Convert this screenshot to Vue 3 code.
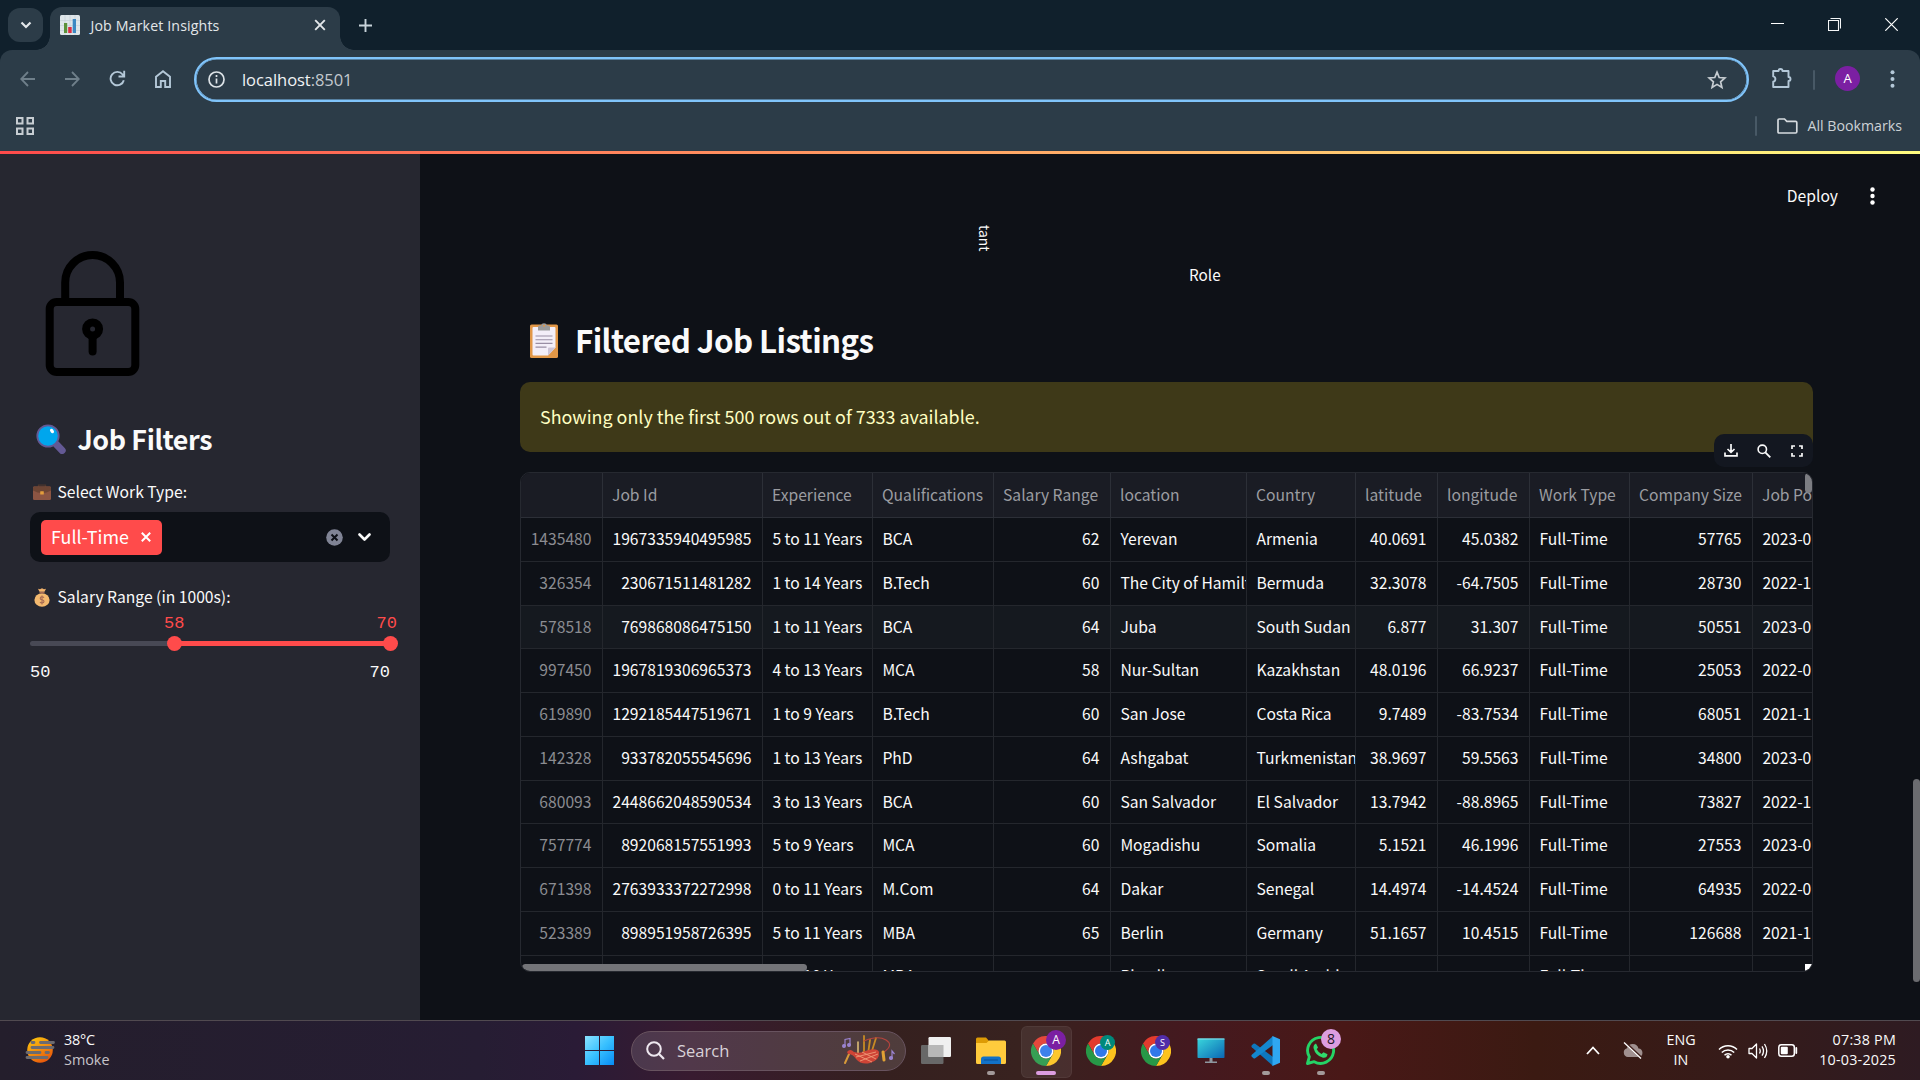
<script setup>
const columns = [
  { label: '', w: 82, right: true },
  { label: 'Job Id', w: 160, right: true },
  { label: 'Experience', w: 110 },
  { label: 'Qualifications', w: 121 },
  { label: 'Salary Range', w: 117, right: true },
  { label: 'location', w: 136 },
  { label: 'Country', w: 109 },
  { label: 'latitude', w: 82, right: true },
  { label: 'longitude', w: 92, right: true },
  { label: 'Work Type', w: 100 },
  { label: 'Company Size', w: 123, right: true },
  { label: 'Job Posting Date', w: 150 }
]
const rows = [
  ['1435480', '1967335940495985', '5 to 11 Years', 'BCA', '62', 'Yerevan', 'Armenia', '40.0691', '45.0382', 'Full-Time', '57765', '2023-0'],
  ['326354', '230671511481282', '1 to 14 Years', 'B.Tech', '60', 'The City of Hamilton', 'Bermuda', '32.3078', '-64.7505', 'Full-Time', '28730', '2022-1'],
  ['578518', '769868086475150', '1 to 11 Years', 'BCA', '64', 'Juba', 'South Sudan', '6.877', '31.307', 'Full-Time', '50551', '2023-0'],
  ['997450', '1967819306965373', '4 to 13 Years', 'MCA', '58', 'Nur-Sultan', 'Kazakhstan', '48.0196', '66.9237', 'Full-Time', '25053', '2022-0'],
  ['619890', '1292185447519671', '1 to 9 Years', 'B.Tech', '60', 'San Jose', 'Costa Rica', '9.7489', '-83.7534', 'Full-Time', '68051', '2021-1'],
  ['142328', '933782055545696', '1 to 13 Years', 'PhD', '64', 'Ashgabat', 'Turkmenistan', '38.9697', '59.5563', 'Full-Time', '34800', '2023-0'],
  ['680093', '2448662048590534', '3 to 13 Years', 'BCA', '60', 'San Salvador', 'El Salvador', '13.7942', '-88.8965', 'Full-Time', '73827', '2022-1'],
  ['757774', '892068157551993', '5 to 9 Years', 'MCA', '60', 'Mogadishu', 'Somalia', '5.1521', '46.1996', 'Full-Time', '27553', '2023-0'],
  ['671398', '2763933372272998', '0 to 11 Years', 'M.Com', '64', 'Dakar', 'Senegal', '14.4974', '-14.4524', 'Full-Time', '64935', '2022-0'],
  ['523389', '898951958726395', '5 to 11 Years', 'MBA', '65', 'Berlin', 'Germany', '51.1657', '10.4515', 'Full-Time', '126688', '2021-1'],
  ['', '', '3 to 10 Years', 'MBA', '', 'Riyadh', 'Saudi Arabia', '', '', 'Full-Time', '', '']
]
const chromes = [
  { letter: 'A', color: '#7b1fa2', active: true },
  { letter: 'A', color: '#00897b' },
  { letter: 'S', color: '#512da8' }
]
</script>

<template>
  <div class="screen">
    <header class="tabstrip">
      <div class="tab-search">
        <svg width="12" height="8" viewBox="0 0 12 8"><path d="M1.5 1.5 6 6l4.500-4.500" fill="none" stroke="#e3e7ea" stroke-width="2.200" /></svg>
      </div>
      <div class="tab">
        <svg class="favicon" width="20" height="20" viewBox="0 0 20 20">
          <rect width="20" height="20" rx="1.500" fill="#dfe6ea" />
          <path d="M0 5.500h20M0 10.500h20M0 15.500h20M5 0v20M10 0v20M15 0v20" stroke="#c3ced6" stroke-width=".6" />
          <path d="M4 8h3.200v10H4z" fill="#5c913b" /><path d="M8.200 12h3.500v6H8.200z" fill="#dd2e44" /><path d="M12.700 4h3.300v14h-3.300z" fill="#3b88c3" />
        </svg>
        <span class="tab-title">Job Market Insights</span>
        <svg width="12" height="12" viewBox="0 0 12 12"><path d="M1.200 1.200l9.600 9.600M10.800 1.200L1.200 10.800" stroke="#e3e7ea" stroke-width="1.900" /></svg>
      </div>
      <svg class="plus" width="13" height="13" viewBox="0 0 13 13"><path d="M6.500 0v13M0 6.500h13" stroke="#c8d3da" stroke-width="1.900" /></svg>
      <div class="win-buttons">
        <svg width="13" height="13" viewBox="0 0 13 13"><path d="M0 5.500h13" stroke="#fff" /></svg>
        <svg width="13" height="13" viewBox="0 0 13 13"><path d="M.5 2.500h10v10h-10zM2.500.5h9a1 1 0 0 1 1 1v9" fill="none" stroke="#f4f6f7" stroke-width="1.100" /></svg>
        <svg width="13" height="13" viewBox="0 0 13 13"><path d="M.3.3l12.400 12.400M12.700.3L.3 12.700" stroke="#fff" stroke-width="1.200" /></svg>
      </div>
    </header>

    <div class="chrome-bars">
      <div class="nav">
        <svg class="i-back" width="16" height="16" viewBox="0 0 16 16"><path d="M15 8H1.500M8 1 1.200 8 8 15" fill="none" stroke="#6f7f8a" stroke-width="1.800" /></svg>
        <svg class="i-fwd" width="16" height="16" viewBox="0 0 16 16"><path d="M1 8h13.500M8 1l6.800 7L8 15" fill="none" stroke="#6f7f8a" stroke-width="1.800" /></svg>
        <svg class="i-reload" width="17" height="17" viewBox="0 0 17 17"><path d="M14.800 10.200A6.700 6.700 0 1 1 13.600 4.500L15 6.200M15.200.8v5.700H9.500" fill="none" stroke="#b4c8d8" stroke-width="1.900" /></svg>
        <svg class="i-home" width="16" height="18" viewBox="0 0 16 18"><path d="M1 6.800 8 1.300l7 5.500V17h-4.800v-6H5.800v6H1z" fill="none" stroke="#b4c8d8" stroke-width="1.900" /></svg>
        <div class="omnibox">
          <svg width="17" height="17" viewBox="0 0 17 17"><circle cx="8.500" cy="8.500" r="7.500" fill="none" stroke="#dde3e7" stroke-width="1.700" /><path d="M8.500 7.500v5M8.500 4v1.900" stroke="#dde3e7" stroke-width="1.700" /></svg>
          <span class="url">localhost<i>:8501</i></span>
          <svg class="star" width="20" height="20" viewBox="0 0 20 20"><path d="M10 2.200l2.200 5.300 5.700.5-4.300 3.800 1.300 5.600-4.900-3-4.900 3 1.300-5.600L2.100 8l5.700-.5z" fill="none" stroke="#c7cdd2" stroke-width="1.700" /></svg>
        </div>
        <svg class="i-ext" width="22" height="22" viewBox="0 0 22 22"><path d="M2.200 4h5.300a2 2 0 0 1 4 0h6v6a2 2 0 0 1 0 4v6H2.200v-5.300a2.700 2.700 0 0 0 0-5.300z" fill="none" stroke="#b4c8d8" stroke-width="1.900" stroke-linejoin="round" /></svg>
        <span class="vbar nav-bar"></span>
        <span class="avatar">A</span>
        <svg class="i-more" width="5" height="18" viewBox="0 0 5 18"><g fill="#b4c8d8"><circle cx="2.500" cy="2.300" r="2" /><circle cx="2.500" cy="9" r="2" /><circle cx="2.500" cy="15.700" r="2" /></g></svg>
      </div>
      <div class="bookmarks">
        <svg width="18" height="18" viewBox="0 0 18 18"><path d="M1 1h5.500v5.500H1zM11.500 1H17v5.500h-5.500zM1 11.500h5.500V17H1zM11.500 11.500H17V17h-5.500z" fill="none" stroke="#c7cdd2" stroke-width="2" /></svg>
        <span class="vbar"></span>
        <svg class="folder" width="21" height="16" viewBox="0 0 21 16"><path d="M1 14V2.200Q1 1 2.200 1h5.300l2.300 2.300h8.800q1.200 0 1.200 1.200v9.300q0 1.200-1.200 1.200H2.200Q1 15 1 14z" fill="none" stroke="#d5dade" stroke-width="1.700" /></svg>
        <span>All Bookmarks</span>
      </div>
    </div>
    <div class="decoration"></div>

    <div class="app">
      <aside>
        <svg class="lock" width="96" height="127" viewBox="0 0 96 127">
          <g fill="none" stroke="#000" stroke-width="8"><rect x="4.700" y="51" width="85.600" height="70" rx="7" /><path d="M20.200 51V31.500a27.400 27.400 0 0 1 54.800 0V51" /><circle cx="47.600" cy="78" r="6.500" /><path d="M47.600 86v14.500" stroke-linecap="round" /></g>
        </svg>
        <h2>
          <svg width="30" height="30" viewBox="0 0 30 30"><path d="M20 20l6.200 6.500" stroke="#635994" stroke-width="7" stroke-linecap="round" /><circle cx="12" cy="12" r="10.700" fill="#00a6ed" stroke="#635994" stroke-width="1.800" /><ellipse cx="16" cy="7" rx="1.700" ry="2.400" fill="#fff" transform="rotate(-38 16 7)" /></svg>
          <span>Job Filters</span>
        </h2>
        <label class="l-work">
          <svg width="18" height="16" viewBox="0 0 18 16"><path d="M5.500 3V1.200h7V3" fill="none" stroke="#4c362c" stroke-width="1.300" /><rect y="2.500" width="18" height="13.500" rx="1.200" fill="#8c5543" /><path d="M1 2.500h16l1 1v3q-9 5-18 0v-3z" fill="#6d4534" /><rect x="7.200" y="7.200" width="3.600" height="3.300" rx=".5" fill="#e39d3c" /></svg>
          <span>Select Work Type:</span>
        </label>
        <div class="select">
          <span class="tag">Full-Time<svg width="10" height="10" viewBox="0 0 10 10"><path d="M.8.8l8.400 8.400M9.200.8.8 9.200" stroke="#fff" stroke-width="2" /></svg></span>
          <svg class="clear" width="17" height="17" viewBox="0 0 17 17"><circle cx="8.500" cy="8.500" r="8.300" fill="#808495" /><path d="M5.500 5.500l6 6M11.500 5.500l-6 6" stroke="#0e1117" stroke-width="2" /></svg>
          <svg width="13" height="9" viewBox="0 0 13 9"><path d="M1.500 1.500l5 5 5-5" fill="none" stroke="#fafafa" stroke-width="2.600" stroke-linecap="round" stroke-linejoin="round" /></svg>
        </div>
        <label class="l-salary">
          <svg width="18" height="19" viewBox="0 0 18 19"><path d="M5 .8l2 .5L9 .3l2 1 2-.5-1.500 3h-5z" fill="#f2b36b" /><ellipse cx="9" cy="12" rx="7.600" ry="6.700" fill="#f3b96f" /><path d="M6.500 4h5v1.400h-5z" fill="#a56953" /><path d="M11 9.700q-.7-1-2-1-1.800 0-1.800 1.500T9 11.700q2 .2 2 1.700T9 15q-1.400 0-2-1M9 7.500v9" fill="none" stroke="#a56953" stroke-width="1.100" /></svg>
          <span>Salary Range (in 1000s):</span>
        </label>
        <div class="slider">
          <div class="values"><span>58</span><span>70</span></div>
          <div class="track"><i class="thumb a"></i><i class="thumb b"></i></div>
          <div class="ticks"><span>50</span><span>70</span></div>
        </div>
      </aside>

      <main>
        <div class="deploy">
          <span>Deploy</span>
          <svg width="5" height="18" viewBox="0 0 5 18"><g fill="#fff"><circle cx="2.500" cy="2.500" r="2.200" /><circle cx="2.500" cy="9" r="2.200" /><circle cx="2.500" cy="15.500" r="2.200" /></g></svg>
        </div>
        <div class="chart-tail"><span class="tick">tant</span><span class="axis">Role</span></div>
        <h1>
          <svg width="28" height="35" viewBox="0 0 28 35"><rect y="1.500" width="28" height="33.500" rx="1.600" fill="#e19747" /><path d="M2.500 5q0-1 1-1h21q1 0 1 1v19.500l-7.500 8H3.500q-1 0-1-1z" fill="#f3eef8" /><path d="M25.500 24.500l-7.500 8v-7q0-1 1-1z" fill="#cdc4d6" /><path d="M8 7.500V4q0-1.500 1.500-1.500H11Q11.500.3 14 .3t3 2.200h1.500Q20 2.500 20 4v3.500z" fill="#9b9b9b" /><circle cx="14" cy="2.700" r="1" fill="#e19747" /><path d="M5.500 13h17M5.500 16.700h17M5.500 20.400h17M5.500 24.100h11" stroke="#998ea4" stroke-width="1.100" /></svg>
          <span>Filtered Job Listings</span>
        </h1>
        <div class="alert">Showing only the first 500 rows out of 7333 available.</div>
        <div class="frame">
          <div class="toolbar">
            <svg width="14" height="13" viewBox="0 0 14 13"><path d="M7 0v8M3.500 5 7 8.300 10.500 5M1 8.500v3.400h12V8.500" fill="none" stroke="#fafafa" stroke-width="1.700" /></svg>
            <svg class="find" width="14" height="14" viewBox="0 0 14 14"><circle cx="5.300" cy="5.300" r="4.200" fill="none" stroke="#fafafa" stroke-width="1.600" /><path d="M8.300 8.300l5 5" stroke="#fafafa" stroke-width="1.900" /></svg>
            <svg width="12" height="12" viewBox="0 0 12 12"><path d="M1 4V1h3M8 1h3v3M11 8v3H8M4 11H1V8" fill="none" stroke="#fafafa" stroke-width="1.700" /></svg>
          </div>
          <div class="grid">
            <div class="row head">
              <div v-for="c in columns" :key="c.label" class="cell" :style="{ width: c.w + 'px' }">{{ c.label }}</div>
            </div>
            <div v-for="(r, n) in rows" :key="n" class="row" :class="{ hover: n === 2 }">
              <div v-for="(v, k) in r" :key="k" class="cell" :class="{ right: columns[k].right }" :style="{ width: columns[k].w + 'px' }">{{ v }}</div>
            </div>
            <i class="hbar"></i><i class="vthumb"></i><i class="corner"></i>
          </div>
        </div>
        <i class="page-thumb"></i>
      </main>
    </div>

    <footer>
      <div class="weather">
        <svg width="30" height="30" viewBox="0 0 30 30">
          <defs><linearGradient id="sun" x1="0" y1="0" x2=".6" y2="1"><stop offset="0" stop-color="#ffcf0d" /><stop offset="1" stop-color="#e8590c" /></linearGradient></defs>
          <circle cx="15" cy="14" r="12.800" fill="url(#sun)" />
          <g stroke="#6d6b70" stroke-width="2.800" stroke-linecap="round"><path d="M7 6.500h2M15.500 6.500h13M7 11.500h21M2 16.500h13M21 16.500h2.500M2 21.500h20" /></g>
        </svg>
        <div><b>38°C</b><span>Smoke</span></div>
      </div>
      <svg class="start" width="29" height="29" viewBox="0 0 29 29"><defs><linearGradient id="win" x1="0" y1="0" x2="29" y2="29" gradientUnits="userSpaceOnUse"><stop offset="0" stop-color="#8be3ff" /><stop offset=".5" stop-color="#38c0ff" /><stop offset="1" stop-color="#078cf5" /></linearGradient></defs><path d="M0 0h14v14H0zM15 0h14v14H15zM0 15h14v14H0zM15 15h14v14H15z" fill="url(#win)" /></svg>
      <div class="search">
        <svg width="19" height="19" viewBox="0 0 19 19"><circle cx="8" cy="8" r="6.800" fill="none" stroke="#eee8ef" stroke-width="2" /><path d="M12.800 12.800l5.200 5.200" stroke="#eee8ef" stroke-width="2.200" /></svg>
        <span>Search</span>
        <svg class="bagpipes" width="55" height="31" viewBox="0 0 55 31">
          <g fill="none" stroke-linecap="round"><path d="M22 1v18M28 5l-2 14M34 3l-5 16" stroke="#c78a24" stroke-width="1.800" /><path d="M16 7v13" stroke="#e4c57a" stroke-width="1.500" /><path d="M22 6Q36 0 44 5t-2 12" stroke="#b4443d" stroke-width="1.200" /><path d="M8 17l-5 11" stroke="#d79a3a" stroke-width="2" /></g>
          <path d="M5 17q3-4 7 0 6 2 11-1 12-4 14 1 1 8-9 11-9 2-14-4-3-5-8-5z" fill="#cf4436" />
          <path d="M13 19l17 8M20 17l14 7M14 22l20-5M18 26l18-7" stroke="#ef9a78" stroke-width=".9" />
          <path d="M41 17l1 8" stroke="#e0a134" stroke-width="3" stroke-linecap="round" />
          <g stroke="#9a83cf" stroke-width="1.200" fill="#9a83cf"><path d="M3 11V4.500l5-1V10M50 23v-7l2.500 3" fill="none" /><circle cx="2" cy="11" r="1.400" /><circle cx="7" cy="10" r="1.400" /><circle cx="49" cy="23" r="1.500" /></g>
        </svg>
      </div>
      <div class="apps">
        <div class="slot"><svg width="30" height="28" viewBox="0 0 30 28"><rect y="8" width="22.500" height="19" rx="1.200" fill="#686868" /><rect x="7.500" width="22.500" height="20" rx="1.200" fill="#f0f0f0" /><path d="M7.500 8h15v12h-15z" fill="#b7b7b7" /></svg></div>
        <div class="slot">
          <svg width="30" height="28" viewBox="0 0 30 28"><path d="M0 2q0-1.500 1.500-1.500H10l3 3.500v5H0z" fill="#dd9b05" /><path d="M0 6h10.500l2.500-2.500h15.500Q30 3.500 30 5v20.500q0 1.500-1.500 1.500h-27Q0 27 0 25.500z" fill="#ffcb3d" /><path d="M5 27v-5q0-2.500 2.500-2.500h15Q25 19.500 25 22v5z" fill="#1272c8" /><path d="M8.500 23h13" stroke="#0b4e94" stroke-width="1.200" stroke-linecap="round" /></svg><i class="dot"></i>
        </div>
        <div v-for="(c, n) in chromes" :key="n" class="slot" :class="{ active: c.active }">
          <svg width="30" height="30" viewBox="0 0 48 48"><path d="M3.200 12A24 24 0 0 1 44.800 12H24A12 12 0 0 0 13.600 30z" fill="#e33b2e" /><path d="M44.800 12A24 24 0 0 1 24 48l10.400-18A12 12 0 0 0 24 12z" fill="#fcc31e" /><path d="M24 48A24 24 0 0 1 3.200 12l10.400 18a12 12 0 0 0 20.800 0z" fill="#279847" /><circle cx="24" cy="24" r="12" fill="#fff" /><circle cx="24" cy="24" r="9.600" fill="#3078ea" /></svg>
          <span class="badge" :style="{ background: c.color }">{{ c.letter }}</span>
          <i v-if="c.active" class="dot"></i>
        </div>
        <div class="slot"><svg width="28" height="26" viewBox="0 0 28 26"><defs><linearGradient id="mon" x1="0" y1="0" x2="1" y2="1"><stop offset="0" stop-color="#39d6dc" /><stop offset="1" stop-color="#0b67b4" /></linearGradient></defs><rect x=".5" y=".5" width="27" height="19.500" rx=".8" fill="url(#mon)" /><path d="M.5.500h27v1H.5z" fill="#8be2ea" /><path d="M12.500 20h3v3.500H20V25H8v-1.500h4.500z" fill="#8e979f" /></svg></div>
        <div class="slot"><svg width="30" height="30" viewBox="0 0 30 30"><path d="M22 30 .8 11.300Q0 10.300.8 9.300l1.700-1.500q.8-.6 1.700 0L22 21z" fill="#0e77bd" /><path d="M22 9L4.200 22.200q-.9.600-1.700 0L.8 20.700q-.8-1 0-2L22 0z" fill="#1487cf" /><path d="M21.500 0 29 3.300v23.400L21.500 30z" fill="#2fa7f2" /></svg><i class="dot"></i></div>
        <div class="slot"><svg width="31" height="31" viewBox="0 0 31 31"><path d="M2.500 28.500l1.800-6.700a13 13 0 1 1 4.900 4.900z" fill="none" stroke="#25d366" stroke-width="2.900" stroke-linejoin="round" /><path d="M11 8.500l2 4-1.300 1.800q1.700 3.200 4.800 4.700l2-1.800 4 2q-.5 4-4.500 3.500Q10.500 21 8.500 13q-.3-3.500 2.500-4.500z" fill="#2fd96c" /></svg><span class="badge eight">8</span><i class="dot"></i></div>
      </div>
      <div class="tray">
        <svg class="t-up" width="14" height="9" viewBox="0 0 14 9"><path d="M1 8l6-6.500L13 8" fill="none" stroke="#fff" stroke-width="1.800" /></svg>
        <svg class="t-cloud" width="22" height="17" viewBox="0 0 22 17"><path d="M6 15a4.500 4.500 0 0 1-1-8.800A6 6 0 0 1 16.500 6.500a4.300 4.300 0 0 1 .5 8.500z" fill="#a0908f" /><path d="M2.500 0l17 16" stroke="#41201c" stroke-width="2.600" /><path d="M2 .5l17 16" stroke="#fff" stroke-width="1.300" /></svg>
        <span class="lang">ENG<br />IN</span>
        <svg class="t-wifi" width="20" height="16" viewBox="0 0 20 16"><g fill="none" stroke="#fff" stroke-width="1.500"><path d="M1 6.500a12.500 12.500 0 0 1 18 0M3.800 9.500a8.700 8.700 0 0 1 12.400 0M6.500 12.300a5 5 0 0 1 7 0" /></g><circle cx="10" cy="13.700" r="1.800" fill="#fff" /></svg>
        <svg class="t-vol" width="20" height="16" viewBox="0 0 20 16"><path d="M1 5.500h3L8.500 1v14L4 10.500H1zM11.500 5.500q1.500 2.500 0 5M14 3.300q3 4.700 0 9.400M16.500 1q4.500 7 0 14" fill="none" stroke="#fff" stroke-width="1.300" stroke-linejoin="round" /></svg>
        <svg class="t-bat" width="20" height="13" viewBox="0 0 20 13"><rect x=".8" y=".8" width="15.500" height="11.400" rx="2.500" fill="none" stroke="#fff" stroke-width="1.500" /><rect x="2.800" y="2.800" width="7" height="7.400" rx="1" fill="#fff" /><path d="M18.300 4v5" stroke="#fff" stroke-width="1.800" stroke-linecap="round" /></svg>
        <span class="clock">07:38 PM<br />10-03-2025</span>
      </div>
    </footer>
  </div>
</template>

<style>
body { background: #0e1117; overflow: hidden; }
</style>

<style scoped>
* { box-sizing: border-box; }
svg { display: block; flex: none; }
.screen { width: 1920px; height: 1080px; display: flex; flex-direction: column; overflow: hidden; background: #10202c; color: #fafafa; font-family: "Noto Sans CJK SC", "Noto Sans", sans-serif; }

.tabstrip { height: 50px; display: flex; flex: none; padding-left: 8px; font-family: "Open Sans", sans-serif; }
.tab-search { width: 35px; height: 34px; margin: 8px 7px 0 0; border-radius: 12px; background: #2c3c48; display: flex; align-items: center; justify-content: center; }
.tab { position: relative; width: 290px; height: 43px; margin-top: 7px; padding: 0 14px 7px 10px; border-radius: 12px 12px 0 0; background: #2c3c48; display: flex; align-items: center; }
.tab::before, .tab::after { content: ""; position: absolute; bottom: 0; width: 14px; height: 14px; }
.tab::before { left: -14px; background: radial-gradient(circle at 0 0, transparent 13.500px, #2c3c48 14px); }
.tab::after { right: -14px; background: radial-gradient(circle at 100% 0, transparent 13.500px, #2c3c48 14px); }
.tab-title { flex: 1; margin-left: 10.500px; font-size: 14.200px; letter-spacing: .13px; color: #e3e7ea; }
.plus { margin: 19px 0 0 19px; }
.win-buttons { margin-left: auto; display: flex; gap: 44px; padding: 18px 22px 0 0; }

.chrome-bars { height: 101px; flex: none; background: #2c3c48; border-radius: 12px 12px 0 0; font-family: "Open Sans", sans-serif; }
.nav { display: flex; align-items: center; height: 59px; padding: 0 20px; }
.i-fwd { margin-left: 28px; }
.i-reload { margin-left: 29px; }
.i-home { margin-left: 28.500px; }
.i-back, .i-fwd, .i-reload, .i-home { margin-bottom: 2px; }
.omnibox { width: 1555px; height: 45px; margin-left: 23.500px; border: 2px solid #80c4fa; box-shadow: inset 0 0 0 .6px #80c4fa; border-radius: 23px; display: flex; align-items: center; padding: 0 20px 0 12px; }
.url { flex: 1; margin-left: 17px; font-size: 16.500px; letter-spacing: -.05px; line-height: 22px; color: #f0f3f5; }
.url i { font-style: normal; color: #c3c9ce; }
.i-ext { margin: 0 0 3px 22px; }
.vbar { width: 2px; height: 20px; background: #485966; border-radius: 1px; }
.nav-bar { margin-left: 20px; }
.avatar { width: 25px; height: 25px; margin: 0 0 2px 20px; border-radius: 50%; background: #7b1fa2; color: #fff; font-size: 13px; line-height: 25px; text-align: center; }
.i-more { margin: 0 0 2px 30px; }
.bookmarks { display: flex; align-items: center; height: 33px; padding: 0 18px 0 16px; font-size: 14.200px; color: #cdd2d6; }
.bookmarks > span:last-child { margin-bottom: 1px; }
.bookmarks .vbar { margin-left: auto; }
.folder { margin: 0 9px 0 20px; }
.decoration { height: 3px; flex: none; background: linear-gradient(90deg, #ff4b4b, #fffd80); }

.app { display: flex; height: 866px; flex: none; }
aside { flex: none; width: 420px; background: #262730; padding: 97px 30px 0; display: flex; flex-direction: column; }
.lock { margin-left: 15px; flex: none; }
h2 { margin: 37px 0 0 6px; height: 48px; display: flex; align-items: center; font-size: 26.850px; font-weight: 700; }
h2 span { margin: 0 0 1px 11.500px; letter-spacing: -.4px; line-height: 48px; }
label { display: flex; align-items: center; height: 28px; font-size: 15.660px; padding-left: 3px; }
label span { margin: 0 0 2px 6.500px; }
.l-work { margin-top: 15px; }
.select { height: 50px; margin-top: 6px; border-radius: 10px; background: #0e1117; display: flex; align-items: center; padding: 0 19px 0 11px; }
.tag { width: 121px; height: 35px; border-radius: 5px; background: #ff4b4b; color: #fff; font-size: 17.900px; display: flex; align-items: center; justify-content: space-between; padding: 0 11px 2px 10px; line-height: 33px; }
.tag svg { margin-top: 2px; }
.clear { margin: 0 15px 0 auto; }
.l-salary { margin-top: 21px; }
.slider { font-family: "Liberation Mono", monospace; font-size: 17px; line-height: 20px; }
.values { display: flex; justify-content: space-between; padding-left: 134px; margin-right: -7px; color: #ff4b4b; height: 20px; margin-top: 3px; }
.track { position: relative; height: 5px; margin-top: 7px; border-radius: 3px; background: linear-gradient(90deg, #484955 40%, #ff4b4b 40%); }
.thumb { position: absolute; top: -5px; width: 15px; height: 15px; border-radius: 50%; background: #ff4b4b; }
.thumb.a { left: 136.500px; } .thumb.b { left: 352.500px; }
.ticks { display: flex; justify-content: space-between; margin-top: 17px; }

main { position: relative; flex: 1; min-width: 0; padding: 0 107px 0 100px; background: #0e1117; }
.deploy { display: flex; align-items: center; height: 84px; justify-content: flex-end; margin-right: -62px; font-size: 15.660px; }
.deploy span { margin: 0 32px 1px 0; }
.chart-tail { display: flex; height: 54px; font-size: 15.300px; }
.tick { writing-mode: vertical-rl; font-size: 13.900px; line-height: 20px; margin: -13px 0 0 455px; height: 32px; }
.axis { margin: 25px 0 0 194px; line-height: 22px; }
h1 { height: 72px; margin: 14px 0 0 10px; display: flex; align-items: center; font-size: 31.300px; font-weight: 700; }
h1 span { margin: 0 0 4px 17px; line-height: 64px; letter-spacing: -.6px; white-space: nowrap; }
h1 svg { margin-bottom: 4px; }
.alert { height: 70px; margin-top: 4px; border-radius: 10px; background: #3e3918; color: #ffffc2; padding-left: 20px; font-size: 17.900px; line-height: 69px; }
.frame { position: relative; margin-top: 20px; }
.toolbar { position: absolute; z-index: 1; right: 0; top: -38px; width: 99px; height: 33px; border-radius: 10px; background: #131720; display: flex; align-items: center; justify-content: space-between; padding: 0 10px; }
.find { margin-right: 2px; }
.grid { position: relative; height: 500px; overflow: hidden; border: 1px solid #262930; border-radius: 10px; }
.row { display: flex; width: 1400px; height: 43.750px; font-size: 15.660px; line-height: 42.500px; }
.row:nth-child(12) { line-height: 40px; }
.cell { flex: none; overflow: hidden; white-space: nowrap; padding: 0 9px 0 9.400px; border-right: 1px solid #24272d; border-bottom: 1px solid #24272d; }
.right { text-align: right; padding-right: 10.500px; }
.row .cell:first-child { color: #8b8c91; }
.head { height: 45px; line-height: 44px; background: #1a1c24; }
.head .cell { color: #9b9ca1; border-color: #2c2f37; padding: 0 0 0 9px; }
.hover { background: #15191f; }
.hbar { position: absolute; left: 1px; bottom: 0; width: 285px; height: 7px; border-radius: 4px; background: #737478; }
.vthumb { position: absolute; right: 0; top: 0; width: 7px; height: 20px; border-radius: 4px; background: #7c7d82; }
.corner { position: absolute; right: 0; bottom: 0; width: 7px; height: 7px; background: #fff; }
.page-thumb { position: absolute; right: 0; top: 625px; width: 7px; height: 203px; border-radius: 4px; background: #6b6c70; }

footer { height: 60px; flex: none; display: flex; align-items: center; border-top: 1px solid #514a50; font-family: "Open Sans", sans-serif; background: linear-gradient(90deg, #241e2c 0, #261d33 25%, #2a1b36 30%, #381b30 36%, #35201f 46%, #38221f 53%, #44191f 62%, #491817 70%, #3b1a12 80%, #361b19 90%, #2e1b22 100%); }
.weather { width: 585px; display: flex; align-items: center; padding-left: 25px; font-size: 14.400px; line-height: 20px; }
.weather div { display: flex; flex-direction: column; margin: 0 0 2px 9px; }
.weather b { font-weight: 400; letter-spacing: -.2px; }
.weather span { color: #c6c3c9; }
.search { width: 275px; height: 40px; margin: 0 2px 0 17px; border: 1px solid #68535f; border-radius: 20px; background: rgba(255, 255, 255, .13); display: flex; align-items: center; padding: 0 8px 0 14px; font-size: 16.500px; color: #d9d2d8; }
.search span { margin: 0 auto 0 12px; }
.apps { display: flex; }
.slot { position: relative; width: 55px; height: 60px; display: flex; align-items: center; justify-content: center; }
.active::before { content: ""; position: absolute; left: 3px; top: 5px; width: 49px; height: 50px; border-radius: 6px; background: #ffffff12; border: 1px solid #ffffff0c; }
.dot { position: absolute; bottom: 6px; left: 24px; width: 8px; height: 4px; border-radius: 2px; background: #a39a9a; }
.active .dot { left: 18px; width: 20px; background: #dc9de0; }
.badge { position: absolute; top: 14px; left: 27px; width: 15px; height: 15px; border-radius: 50%; color: #fff; font-size: 9px; line-height: 15px; text-align: center; }
.active .badge { top: 9px; left: 28px; width: 20px; height: 20px; line-height: 20px; font-size: 12px; }
.eight { top: 8px; left: 28px; width: 20px; height: 20px; line-height: 20px; font-size: 14px; color: #21171f; background: #dc9de0; }
.tray { flex: 1; display: flex; align-items: center; padding-right: 24px; font-size: 14.300px; line-height: 20px; }
.t-up { margin-left: 238px; }
.t-cloud { margin-left: 22px; }
.lang { width: 50px; margin: 0 0 2px 12px; text-align: center; }
.t-wifi { margin-left: 12px; } .t-vol { margin-left: 10px; } .t-bat { margin-left: 10px; }
.clock { margin: 0 0 2px auto; text-align: right; white-space: nowrap; letter-spacing: .22px; }
</style>
